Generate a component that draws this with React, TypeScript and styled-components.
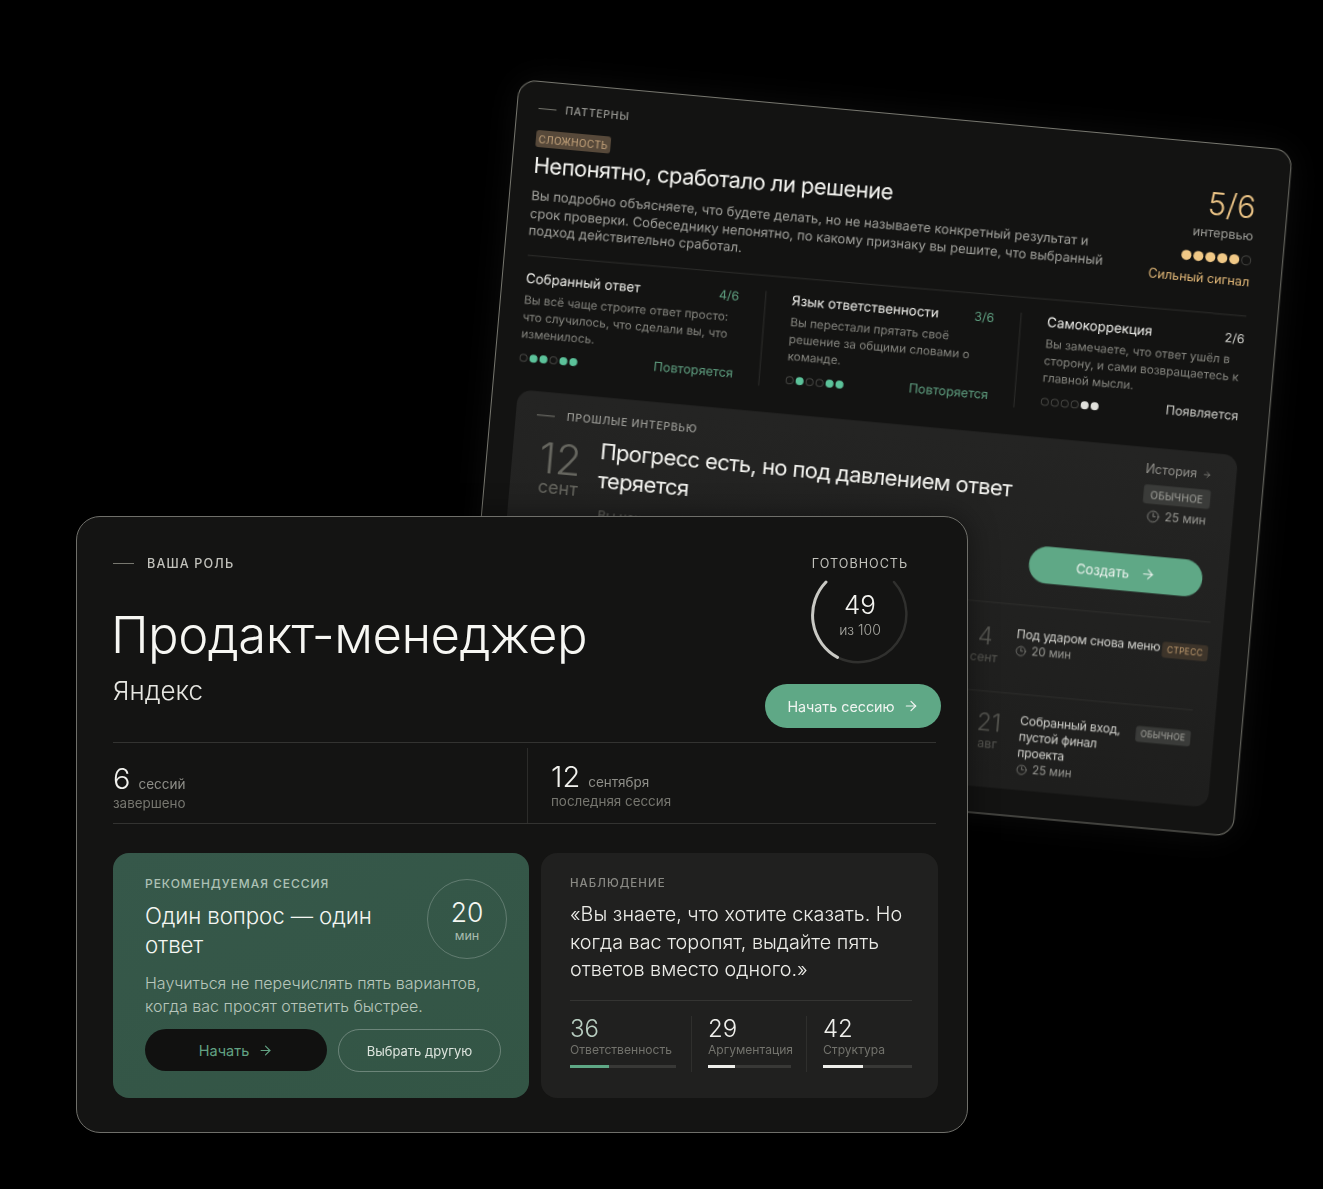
import React from "react";
import styled, { createGlobalStyle } from "styled-components";
import { ArrowRight, Clock3 } from "lucide-react";

const Global = createGlobalStyle`
  html, body { margin: 0; background: #000; }
  * { box-sizing: border-box; }
  body { font-family: Inter, "Noto Sans", "Liberation Sans", sans-serif; font-weight: 300; color: #eee; }
`;

const Stage = styled.div`
  position: relative;
  width: 1323px;
  height: 1189px;
  overflow: hidden;
  background: #000;
`;

/* ---------- back window ---------- */
const BackWindow = styled.section`
  position: absolute;
  left: 519px;
  top: 79px;
  width: 777px;
  height: 689px;
  transform-origin: 0 0;
  transform: matrix(0.9961, 0.0914, -0.087, 0.997, 0, 0);
  border: 1px solid #77776f;
  border-radius: 18px;
  background: #131312;
  box-shadow: 0 0 34px rgba(255, 255, 255, 0.05);
  padding: 16px 31px 0 21px;
  filter: blur(0.25px);
`;

const BackHead = styled.div`
  display: flex;
  justify-content: space-between;
  height: 158px;
`;
const BackHeadMain = styled.div`
  width: 590px;
`;
const HeadCopy = styled.div`
  margin-top: 3px;
  transform-origin: 0 0;
  transform: rotate(-0.55deg);
`;
const Eyebrow = styled.div`
  display: flex;
  align-items: center;
  gap: 9px;
  height: 20px;
  font-size: 10.5px;
  font-weight: 500;
  letter-spacing: 0.07em;
  color: #9b9b96;
  text-transform: uppercase;
  &::before {
    content: "";
    width: 18px;
    height: 1px;
    background: #77776f;
  }
`;
const PanelEyebrow = styled(Eyebrow)`
  gap: 12px;
`;
const ToneBadge = styled.span<{ $tone: "warm" | "plain"; $small?: boolean }>`
  display: inline-flex;
  flex: none;
  align-items: center;
  justify-content: center;
  height: ${(p) => (p.$small ? 16 : 19)}px;
  padding: 0 ${(p) => (p.$small ? 5 : 7)}px;
  border-radius: 3px;
  font-size: ${(p) => (p.$small ? 8.5 : 10)}px;
  font-weight: 400;
  letter-spacing: 0.03em;
  text-transform: uppercase;
  white-space: nowrap;
  color: ${(p) => (p.$tone === "warm" ? "#c49f71" : "#a9a9a3")};
  background: ${(p) => (p.$tone === "warm" ? "#3d342a" : "#3a3b39")};
`;
const PatternTag = styled(ToneBadge)`
  margin-top: 12px;
  height: 17px;
  width: 75px;
  background: #57493a;
  color: #c9a77e;
`;
const PatternTitle = styled.h2`
  margin: 0;
  font-size: 22px;
  line-height: 30px;
  font-weight: 400;
  color: #f4f4f0;
  letter-spacing: -0.55px;
  transform-origin: 0 50%;
  transform: rotate(-0.4deg);
`;
const PatternText = styled.p`
  margin: 7px 0 0;
  font-size: 13.1px;
  line-height: 17.6px;
  color: #a1a19c;
  font-weight: 400;
`;
const Score = styled.div`
  width: 120px;
  display: flex;
  flex-direction: column;
  align-items: flex-end;
  padding-top: 26px;
`;
const ScoreValue = styled.div`
  font-size: 31px;
  line-height: 36px;
  color: #ecc486;
`;
const ScoreUnit = styled.div`
  margin-top: 2px;
  font-size: 12.7px;
  line-height: 18px;
  color: #9a9a95;
  font-weight: 400;
`;
const DotRow = styled.div<{ $gap?: number }>`
  display: flex;
  gap: ${(p) => p.$gap ?? 2}px;
`;
const Dot = styled.i<{ $color?: string; $size: number }>`
  display: block;
  width: ${(p) => p.$size}px;
  height: ${(p) => p.$size}px;
  border-radius: 50%;
  background: ${(p) => p.$color ?? "transparent"};
  border: ${(p) => (p.$color ? "none" : "1px solid #454542")};
`;
const ScoreDots = styled(DotRow)`
  margin-top: 10px;
`;
const ScoreLabel = styled.div`
  margin-top: 8px;
  font-size: 12.7px;
  line-height: 18px;
  color: #e2b878;
  font-weight: 400;
`;
const PatternGrid = styled.div`
  display: grid;
  grid-template-columns: 241px 256px 1fr;
  margin-left: 2px;
  margin-top: -1px;
  border-top: 1px solid #2e2e2c;
  transform-origin: 0 0;
  transform: rotate(-0.4deg);
`;
const PatternCell = styled.div`
  position: relative;
  padding: 12px 27px 0 26px;
  height: 110px;
  &:first-child {
    padding-left: 0;
  }
  &:last-child {
    padding-right: 0;
  }
  &:not(:last-child)::after {
    content: "";
    position: absolute;
    top: 15px;
    right: 0;
    bottom: 0;
    width: 1px;
    background: #2e2e2c;
  }
`;
const CellHead = styled.div`
  display: flex;
  justify-content: space-between;
  align-items: baseline;
  height: 22px;
`;
const CellTitle = styled.div`
  font-size: 13.4px;
  line-height: 20px;
  color: #f1f1ed;
  font-weight: 400;
`;
const CellCount = styled.div<{ $color: string }>`
  font-size: 12.5px;
  color: ${(p) => p.$color};
  font-weight: 400;
`;
const CellText = styled.p`
  margin: 2px 0 0;
  font-size: 11.8px;
  line-height: 17.2px;
  color: #85857f;
  font-weight: 400;
  height: 53px;
`;
const CellFoot = styled.div`
  display: flex;
  justify-content: space-between;
  align-items: flex-start;
  margin-top: 2px;
`;
const CellDots = styled(DotRow)`
  margin-top: 7px;
`;
const CellStatus = styled.div<{ $color: string }>`
  font-size: 12.7px;
  line-height: 18px;
  color: ${(p) => p.$color};
  font-weight: 400;
`;

const HistoryPanel = styled.div`
  margin: 24px -4px 0 4px;
  height: 353px;
  border-radius: 14px;
  padding: 0 25px 0 21px;
  background: linear-gradient(180deg, #242423, #1e1e1d);
`;
const HistoryHead = styled.div`
  display: flex;
  justify-content: space-between;
  height: 103px;
  padding-top: 13px;
`;
const HistoryMain = styled.div`
  width: 560px;
`;
const Hero = styled.div`
  display: flex;
  gap: 15px;
  margin: 4px 0 0 3px;
`;
const HeroDate = styled.div`
  width: 50px;
  padding-top: 10px;
  text-align: center;
  color: #66665f;
  font-size: 18px;
  line-height: 20px;
  font-weight: 400;
`;
const HeroDay = styled.div`
  font-size: 42px;
  line-height: 38px;
  font-weight: 300;
`;
const HeroTitle = styled.h3`
  margin: 3px 0 0;
  font-size: 22px;
  line-height: 29px;
  font-weight: 400;
  letter-spacing: -0.6px;
  color: #f4f4f0;
`;
const HistoryAside = styled.div`
  width: 66px;
`;
const HistoryLink = styled.div`
  display: flex;
  align-items: center;
  gap: 5px;
  white-space: nowrap;
  font-size: 12.5px;
  line-height: 18px;
  color: #908f8a;
  font-weight: 400;
`;
const AsideBadge = styled(ToneBadge)`
  margin-top: 6px;
`;
const Duration = styled.div<{ $size?: number }>`
  display: flex;
  align-items: center;
  gap: 5px;
  white-space: nowrap;
  font-size: ${(p) => p.$size ?? 12}px;
  line-height: 16px;
  color: #9a9a95;
  font-weight: 400;
`;
const AsideDuration = styled(Duration)`
  margin-top: 4px;
  padding-left: 5px;
`;
const HistoryBody = styled.div`
  display: grid;
  grid-template-columns: 1fr 235px;
`;
const HiddenNote = styled.p`
  margin: 6px 0 0 69px;
  font-size: 13px;
  line-height: 18px;
  color: #6e6e68;
  font-weight: 400;
`;
const ListColumn = styled.div`
  display: flex;
  flex-direction: column;
  align-items: stretch;
`;
const CreateButton = styled.div`
  align-self: flex-end;
  display: flex;
  align-items: center;
  justify-content: center;
  gap: 11px;
  width: 174px;
  height: 37px;
  margin-top: 5px;
  margin-bottom: 23px;
  border-radius: 19px;
  background: #5fa886;
  color: #f0f5f1;
  font-size: 13.2px;
  font-weight: 400;
`;
const SessionRow = styled.div<{ $inset: number; $pull: number; $height: number; $top: number }>`
  display: flex;
  align-items: flex-start;
  height: ${(p) => p.$height}px;
  padding: ${(p) => p.$top}px 0 0 ${(p) => p.$inset}px;
  margin-right: ${(p) => p.$pull}px;
  border-top: 1px solid #30302e;
`;
const RowDate = styled.div`
  width: 48px;
  flex: none;
  text-align: center;
  font-size: 12.5px;
  line-height: 15px;
  font-weight: 400;
  color: #5a5a55;
`;
const RowDay = styled.div`
  font-size: 24px;
  line-height: 26px;
  font-weight: 300;
`;
const RowMain = styled.div`
  flex: 1;
  padding-left: 7px;
  min-width: 0;
`;
const RowTitle = styled.div<{ $single?: boolean }>`
  font-size: 12.2px;
  line-height: 16px;
  letter-spacing: -0.2px;
  color: #d5d5d0;
  font-weight: 400;
  white-space: ${(p) => (p.$single ? "nowrap" : "normal")};
`;
const RowBadge = styled(ToneBadge)`
  margin: 2px 0 0 4px;
`;

/* ---------- front window ---------- */
const FrontWindow = styled.section`
  position: absolute;
  left: 76px;
  top: 516px;
  width: 892px;
  height: 617px;
  border: 1px solid #6f6f6a;
  border-radius: 24px;
  background: #141413;
  box-shadow: 0 0 30px rgba(0, 0, 0, 0.45);
  padding: 36px 26px 0 36px;
`;
const FrontHead = styled.div`
  display: flex;
  justify-content: space-between;
  height: 189px;
`;
const RoleEyebrow = styled(Eyebrow)`
  gap: 13px;
  font-size: 12.6px;
  letter-spacing: 0.09em;
  color: #c2c2bc;
  &::before {
    width: 21px;
  }
`;
const RoleTitle = styled.h1`
  margin: 31px 0 0 -2px;
  font-size: 50.8px;
  line-height: 62px;
  font-weight: 300;
  letter-spacing: -0.5px;
  color: #f7f7f3;
`;
const RoleCompany = styled.div`
  margin-top: 9px;
  font-size: 26px;
  line-height: 32px;
  color: #e6e6e1;
`;
const ReadyColumn = styled.div`
  width: 176px;
  display: flex;
  flex-direction: column;
`;
const ReadyGroup = styled.div`
  width: 100px;
  margin-left: 45px;
  display: flex;
  flex-direction: column;
  align-items: center;
`;
const ReadyLabel = styled.div`
  margin-top: 2px;
  font-size: 12.6px;
  line-height: 18px;
  font-weight: 400;
  letter-spacing: 0.08em;
  color: #c2c2bc;
  white-space: nowrap;
`;
const Ring = styled.div`
  display: grid;
  margin-top: 7px;
  width: 102px;
  height: 86px;
  > * {
    grid-area: 1 / 1;
  }
`;
const RingText = styled.div`
  display: flex;
  flex-direction: column;
  align-items: center;
  padding-top: 9px;
`;
const RingValue = styled.div`
  font-size: 26px;
  line-height: 32px;
  color: #f4f4f0;
`;
const RingUnit = styled.div`
  font-size: 14px;
  line-height: 18px;
  color: #aaaaa4;
`;
const StartButton = styled.div`
  margin-top: 18px;
  width: 176px;
  height: 44px;
  border-radius: 22px;
  background: #5fa886;
  display: flex;
  align-items: center;
  justify-content: center;
  gap: 8px;
  color: #f0f5f1;
  font-size: 14.3px;
  font-weight: 400;
`;
const StatsRow = styled.div`
  display: grid;
  grid-template-columns: 415px 1fr;
  height: 82px;
  margin-right: 5px;
  border-top: 1px solid #333331;
  border-bottom: 1px solid #333331;
`;
const Stat = styled.div<{ $pad: number; $top: number }>`
  position: relative;
  padding: ${(p) => p.$top}px 0 0 ${(p) => p.$pad}px;
  &:first-child::after {
    content: "";
    position: absolute;
    top: 5px;
    right: 0;
    bottom: 0;
    width: 1px;
    background: #2c2c2a;
  }
`;
const StatLine = styled.div`
  display: flex;
  align-items: baseline;
  gap: 8px;
  height: 30px;
`;
const StatValue = styled.span`
  font-size: 29px;
  line-height: 30px;
  color: #f1f1ed;
`;
const StatUnit = styled.span`
  font-size: 13.5px;
  color: #8e8e88;
  font-weight: 400;
`;
const StatNote = styled.div`
  font-size: 13.4px;
  line-height: 18px;
  color: #76766f;
  font-weight: 400;
`;
const LowerGrid = styled.div`
  display: grid;
  grid-template-columns: 416px 397px;
  gap: 12px;
  margin-top: 29px;
`;
const SessionCard = styled.div`
  height: 245px;
  border-radius: 16px;
  background: linear-gradient(160deg, #36584a, #335545);
  padding: 23px 22px 0 32px;
`;
const SessionTop = styled.div`
  display: flex;
  justify-content: space-between;
  height: 86px;
`;
const CardLabel = styled.div<{ $color: string; $size: number; $track: number }>`
  font-size: ${(p) => p.$size}px;
  line-height: 16px;
  font-weight: 500;
  letter-spacing: ${(p) => p.$track}em;
  color: ${(p) => p.$color};
  white-space: nowrap;
`;
const SessionTitle = styled.h4`
  margin: 9px 0 0;
  width: 250px;
  font-size: 22.3px;
  line-height: 29px;
  font-weight: 300;
  letter-spacing: -0.1px;
  color: #f4f6f2;
`;
const TimeCircle = styled.div`
  flex: none;
  width: 80px;
  height: 80px;
  margin-top: 3px;
  border-radius: 50%;
  border: 1px solid rgba(255, 255, 255, 0.22);
  display: flex;
  flex-direction: column;
  align-items: center;
  justify-content: center;
`;
const TimeValue = styled.div`
  font-size: 26.5px;
  line-height: 32px;
  color: #f4f6f2;
`;
const TimeUnit = styled.div`
  font-size: 12.6px;
  line-height: 15px;
  color: #a9bcaf;
  font-weight: 400;
`;
const SessionText = styled.p`
  margin: 10px 0 0;
  font-size: 16px;
  line-height: 23px;
  color: #b7c6bb;
`;
const ActionRow = styled.div`
  display: flex;
  gap: 11px;
  margin-top: 11px;
`;
const GoButton = styled.div`
  width: 182px;
  height: 42px;
  border-radius: 21px;
  background: #111110;
  display: flex;
  align-items: center;
  justify-content: center;
  gap: 9px;
  color: #62a283;
  font-size: 14.5px;
  font-weight: 400;
`;
const AltButton = styled.div`
  width: 163px;
  height: 43px;
  border-radius: 22px;
  border: 1px solid rgba(255, 255, 255, 0.28);
  display: flex;
  align-items: center;
  justify-content: center;
  color: #dde5de;
  font-size: 13px;
  font-weight: 400;
`;
const InsightCard = styled.div`
  height: 245px;
  border-radius: 16px;
  background: #20201f;
  padding: 22px 26px 0 29px;
`;
const Quote = styled.p`
  margin: 10px 0 0;
  font-size: 19.8px;
  line-height: 27.5px;
  color: #ecece8;
`;
const MetricRow = styled.div`
  display: grid;
  grid-template-columns: 122px 115px 1fr;
  margin-top: 16px;
  padding-top: 15px;
  border-top: 1px solid #343432;
`;
const Metric = styled.div`
  height: 56px;
  &:not(:first-child) {
    padding-left: 16px;
  }
  &:not(:last-child) {
    padding-right: 15px;
    border-right: 1px solid #2f2f2d;
  }
`;
const MetricValue = styled.div<{ $color: string }>`
  font-size: 24px;
  line-height: 26px;
  color: ${(p) => p.$color};
`;
const MetricLabel = styled.div`
  font-size: 12.1px;
  line-height: 16px;
  color: #72726c;
  font-weight: 400;
  white-space: nowrap;
`;
const MetricTrack = styled.div`
  margin-top: 7px;
  height: 3px;
  background: #383836;
`;
const MetricFill = styled.div<{ $color: string }>`
  height: 100%;
  background: ${(p) => p.$color};
`;

const Arrow = ({ size }: { size: number }) => <ArrowRight size={size} strokeWidth={1.8} />;
const Dots = ({ on, color, size, gap }: { on: number[]; color: string; size: number; gap?: number }) => (
  <DotRow $gap={gap}>
    {[0, 1, 2, 3, 4, 5].map((i) => (
      <Dot key={i} $size={size} $color={on.includes(i) ? color : undefined} />
    ))}
  </DotRow>
);

const patterns = [
  {
    title: "Собранный ответ",
    count: "4/6",
    text: "Вы всё чаще строите ответ просто: что случилось, что сделали вы, что изменилось.",
    on: [1, 2, 4, 5],
    color: "#5cc29a",
    label: "#5f9f80",
    status: "Повторяется",
  },
  {
    title: "Язык ответственности",
    count: "3/6",
    text: "Вы перестали прятать своё решение за общими словами о команде.",
    on: [1, 4, 5],
    color: "#5cc29a",
    label: "#5f9f80",
    status: "Повторяется",
  },
  {
    title: "Самокоррекция",
    count: "2/6",
    text: "Вы замечаете, что ответ ушёл в сторону, и сами возвращаетесь к главной мысли.",
    on: [4, 5],
    color: "#e0e0db",
    label: "#cfcfca",
    status: "Появляется",
  },
];

const metrics = [
  { value: 36, label: "Ответственность", number: "#b9cfc2", fill: "#5fa886", pct: 37 },
  { value: 29, label: "Аргументация", number: "#f0f0ec", fill: "#eeeeea", pct: 32 },
  { value: 42, label: "Структура", number: "#f0f0ec", fill: "#eeeeea", pct: 45 },
];

export default function App() {
  return (
    <Stage>
      <Global />
      <BackWindow>
        <BackHead>
          <BackHeadMain>
            <Eyebrow>Паттерны</Eyebrow>
            <PatternTag $tone="warm">Сложность</PatternTag>
            <HeadCopy>
              <PatternTitle>Непонятно, сработало ли решение</PatternTitle>
              <PatternText>
                Вы подробно объясняете, что будете делать, но не называете конкретный результат и срок проверки.
                Собеседнику непонятно, по какому признаку вы решите, что выбранный подход действительно сработал.
              </PatternText>
            </HeadCopy>
          </BackHeadMain>
          <Score>
            <ScoreValue>5/6</ScoreValue>
            <ScoreUnit>интервью</ScoreUnit>
            <ScoreDots>
              <Dots on={[0, 1, 2, 3, 4]} color="#f0c886" size={10} />
            </ScoreDots>
            <ScoreLabel>Сильный сигнал</ScoreLabel>
          </Score>
        </BackHead>
        <PatternGrid>
          {patterns.map((p) => (
            <PatternCell key={p.title}>
              <CellHead>
                <CellTitle>{p.title}</CellTitle>
                <CellCount $color={p.label}>{p.count}</CellCount>
              </CellHead>
              <CellText>{p.text}</CellText>
              <CellFoot>
                <CellDots>
                  <Dots on={p.on} color={p.color} size={8} />
                </CellDots>
                <CellStatus $color={p.label}>{p.status}</CellStatus>
              </CellFoot>
            </PatternCell>
          ))}
        </PatternGrid>
        <HistoryPanel>
          <HistoryHead>
            <HistoryMain>
              <PanelEyebrow>Прошлые интервью</PanelEyebrow>
              <Hero>
                <HeroDate>
                  <HeroDay>12</HeroDay>
                  сент
                </HeroDate>
                <HeroTitle>Прогресс есть, но под давлением ответ теряется</HeroTitle>
              </Hero>
            </HistoryMain>
            <HistoryAside>
              <HistoryLink>
                История <Arrow size={14} />
              </HistoryLink>
              <AsideBadge $tone="plain">Обычное</AsideBadge>
              <AsideDuration>
                <Clock3 size={13} strokeWidth={1.5} /> 25 мин
              </AsideDuration>
            </HistoryAside>
          </HistoryHead>
          <HistoryBody>
            <HiddenNote>Вы начинаете уверенно, но после уточнений теряете главную мысль.</HiddenNote>
            <ListColumn>
              <CreateButton>
                Создать <Arrow size={15} />
              </CreateButton>
              <SessionRow $inset={0} $pull={-12} $height={89} $top={21}>
                <RowDate>
                  <RowDay>4</RowDay>
                  сент
                </RowDate>
                <RowMain>
                  <RowTitle $single>Под ударом снова меню</RowTitle>
                  <Duration $size={11.5}>
                    <Clock3 size={11} strokeWidth={1.5} /> 20 мин
                  </Duration>
                </RowMain>
                <RowBadge $tone="warm" $small>
                  Стресс
                </RowBadge>
              </SessionRow>
              <SessionRow $inset={11} $pull={-2} $height={95} $top={18}>
                <RowDate>
                  <RowDay>21</RowDay>
                  авг
                </RowDate>
                <RowMain>
                  <RowTitle>Собранный вход, пустой финал проекта</RowTitle>
                  <Duration $size={11.5}>
                    <Clock3 size={11} strokeWidth={1.5} /> 25 мин
                  </Duration>
                </RowMain>
                <RowBadge $tone="plain" $small>
                  Обычное
                </RowBadge>
              </SessionRow>
            </ListColumn>
          </HistoryBody>
        </HistoryPanel>
      </BackWindow>

      <FrontWindow>
        <FrontHead>
          <div>
            <RoleEyebrow>Ваша роль</RoleEyebrow>
            <RoleTitle>Продакт-менеджер</RoleTitle>
            <RoleCompany>Яндекс</RoleCompany>
          </div>
          <ReadyColumn>
            <ReadyGroup>
              <ReadyLabel>ГОТОВНОСТЬ</ReadyLabel>
              <Ring>
                <svg width="102" height="86" viewBox="0 0 102 86" fill="none">
                  <path d="M85 2 A48 48 0 0 1 28.5 77.4" stroke="#30302e" strokeWidth="2.5" strokeLinecap="round" />
                  <path d="M17 2 A48 48 0 0 0 28.5 77.4" stroke="#c9c9c4" strokeWidth="3" strokeLinecap="round" />
                </svg>
                <RingText>
                  <RingValue>49</RingValue>
                  <RingUnit>из 100</RingUnit>
                </RingText>
              </Ring>
            </ReadyGroup>
            <StartButton>
              Начать сессию <Arrow size={16} />
            </StartButton>
          </ReadyColumn>
        </FrontHead>
        <StatsRow>
          <Stat $pad={0} $top={21}>
            <StatLine>
              <StatValue>6</StatValue>
              <StatUnit>сессий</StatUnit>
            </StatLine>
            <StatNote>завершено</StatNote>
          </Stat>
          <Stat $pad={23} $top={19}>
            <StatLine>
              <StatValue>12</StatValue>
              <StatUnit>сентября</StatUnit>
            </StatLine>
            <StatNote>последняя сессия</StatNote>
          </Stat>
        </StatsRow>
        <LowerGrid>
          <SessionCard>
            <SessionTop>
              <div>
                <CardLabel $color="#adc1b5" $size={12} $track={0.08}>
                  РЕКОМЕНДУЕМАЯ СЕССИЯ
                </CardLabel>
                <SessionTitle>Один вопрос — один ответ</SessionTitle>
              </div>
              <TimeCircle>
                <TimeValue>20</TimeValue>
                <TimeUnit>мин</TimeUnit>
              </TimeCircle>
            </SessionTop>
            <SessionText>
              Научиться не перечислять пять вариантов, когда вас просят ответить быстрее.
            </SessionText>
            <ActionRow>
              <GoButton>
                Начать <Arrow size={15} />
              </GoButton>
              <AltButton>Выбрать другую</AltButton>
            </ActionRow>
          </SessionCard>
          <InsightCard>
            <CardLabel $color="#8a8a85" $size={11.5} $track={0.09}>
              НАБЛЮДЕНИЕ
            </CardLabel>
            <Quote>«Вы знаете, что хотите сказать. Но когда вас торопят, выдайте пять ответов вместо одного.»</Quote>
            <MetricRow>
              {metrics.map((m) => (
                <Metric key={m.label}>
                  <MetricValue $color={m.number}>{m.value}</MetricValue>
                  <MetricLabel>{m.label}</MetricLabel>
                  <MetricTrack>
                    <MetricFill $color={m.fill} style={{ width: `${m.pct}%` }} />
                  </MetricTrack>
                </Metric>
              ))}
            </MetricRow>
          </InsightCard>
        </LowerGrid>
      </FrontWindow>
    </Stage>
  );
}
